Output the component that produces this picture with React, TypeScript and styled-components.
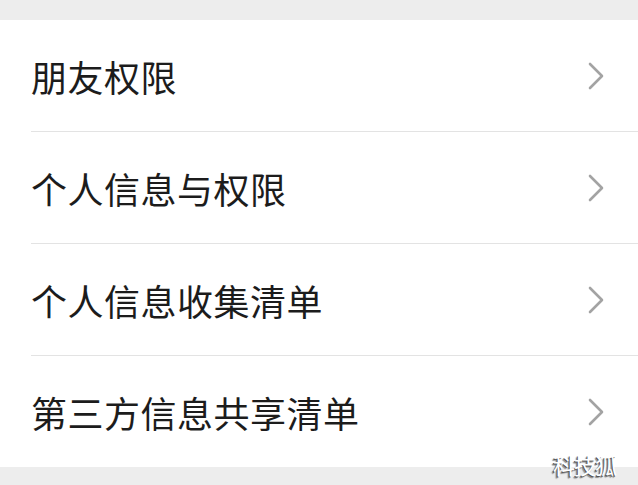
import React from "react";
import styled, { createGlobalStyle } from "styled-components";

const GlobalStyle = createGlobalStyle`
  html, body {
    margin: 0;
    padding: 0;
    background: #ededed;
  }
  body {
    font-family: "Noto Sans CJK SC", "Noto Sans", sans-serif;
  }
`;

const items = ["朋友权限", "个人信息与权限", "个人信息收集清单", "第三方信息共享清单"];

const Chevron = () => (
  <svg width="16" height="28" viewBox="0 0 16 28">
    <path d="M2 2 L14 14 L2 26" fill="none" stroke="#a3a3a3" strokeWidth="2.6" strokeLinecap="round" strokeLinejoin="round" />
  </svg>
);

export default function App() {
  return (
    <>
      <GlobalStyle />
      <Page>
        <List>
          {items.map((label, i) => (
            <Row key={label} $last={i === items.length - 1}>
              <Label>{label}</Label>
              <Arrow>
                <Chevron />
              </Arrow>
            </Row>
          ))}
        </List>
        <Watermark>科技狐</Watermark>
      </Page>
    </>
  );
}

const Page = styled.div`
  position: relative;
  width: 638px;
  height: 485px;
  padding-top: 20px;
  box-sizing: border-box;
  background: #ededed;
  overflow: hidden;
`;

const List = styled.div`
  background: #ffffff;
  padding-left: 31px;
`;

const Row = styled.div<{ $last?: boolean }>`
  display: flex;
  align-items: center;
  justify-content: space-between;
  height: 111px;
  border-bottom: ${(p) => (p.$last ? "none" : "1px solid #e3e3e3")};
  padding-right: 34px;
`;

const Label = styled.span`
  font-size: 36px;
  color: #1c1c1c;
  letter-spacing: 0.5px;
  line-height: 1;
`;

const Arrow = styled.span`
  display: flex;
  align-items: center;
`;

const Watermark = styled.div`
  position: absolute;
  right: 22px;
  bottom: 5px;
  font-size: 22px;
  color: #ffffff;
  font-weight: 400;
  letter-spacing: -1px;
  text-shadow: -1px 1px 0 #555, -2px 2px 1px #888;
`;
